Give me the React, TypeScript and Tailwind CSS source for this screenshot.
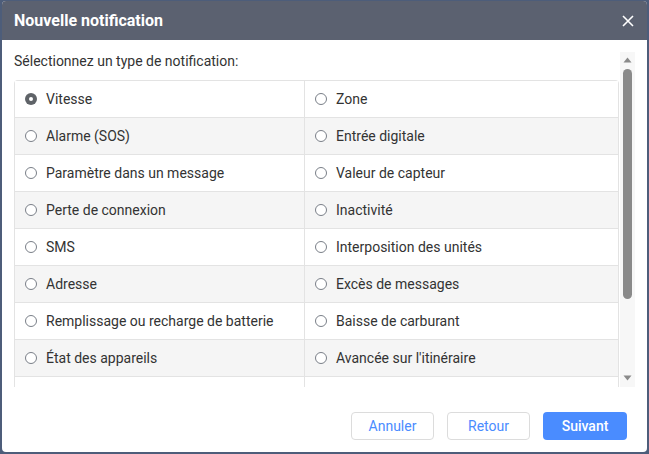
const types = [
  ["Vitesse", "Zone"],
  ["Alarme (SOS)", "Entrée digitale"],
  ["Paramètre dans un message", "Valeur de capteur"],
  ["Perte de connexion", "Inactivité"],
  ["SMS", "Interposition des unités"],
  ["Adresse", "Excès de messages"],
  ["Remplissage ou recharge de batterie", "Baisse de carburant"],
  ["État des appareils", "Avancée sur l'itinéraire"],
]

const Radio = ({ checked }: { checked?: boolean }) =>
  checked ? (
    <span className="w-[12px] h-[12px] rounded-full bg-[#5f6368] flex items-center justify-center shrink-0">
      <span className="w-[4px] h-[4px] rounded-full bg-white" />
    </span>
  ) : (
    <span className="w-[12px] h-[12px] rounded-full border border-[#7a7f88] bg-white shrink-0" />
  )

const Cell = ({ label, checked, first }: { label: string; checked?: boolean; first?: boolean }) => (
  <div className={`flex items-center gap-[9px] pl-[10px] h-full ${first ? "border-r border-[#e3e3e3]" : ""}`}>
    <Radio checked={checked} />
    <span className="text-[14px] text-[#333]">{label}</span>
  </div>
)

const App = () => {
  return (
    <div
      className="w-[649px] h-[454px] bg-[#4d5d7a] pt-px px-[2px] pb-[2px]"
      style={{ fontFamily: "Roboto, 'Liberation Sans', sans-serif" }}
    >
      <div className="h-full bg-white rounded-[4px] overflow-hidden flex flex-col">
        <div className="h-[39px] bg-[#5b6170] flex items-center justify-between pl-3 pr-[13px] shrink-0">
          <span className="text-white font-bold text-[16px]">Nouvelle notification</span>
          <svg width="12" height="12" viewBox="0 0 12 12" className="mt-px">
            <path d="M1 1L11 11M11 1L1 11" stroke="white" strokeWidth="1.6" />
          </svg>
        </div>

        <div className="flex pl-3 pr-3 mt-[12px] h-[335px] shrink-0">
          <div className="flex-1 overflow-hidden">
            <div className="h-[19px] leading-[19px] text-[14px] text-[#333] mb-[9px]">
              Sélectionnez un type de notification:
            </div>
            <div className="border-l border-r border-t border-[#e3e3e3] rounded-t-[4px]">
              {types.map(([a, b], i) => (
                <div
                  key={a}
                  className={`grid grid-cols-[290px_1fr] h-[37px] border-b border-[#e3e3e3] ${i % 2 === 1 ? "bg-[#f5f5f5]" : "bg-white"}`}
                >
                  <Cell label={a} checked={i === 0} first />
                  <Cell label={b} />
                </div>
              ))}
              {/* next row, scrolled out of view */}
              <div className="grid grid-cols-[290px_1fr] h-[37px] bg-white">
                <div className="border-r border-[#e3e3e3]" />
                <div />
              </div>
            </div>
          </div>
          <div className="w-[15px] bg-[#f7f7f7] flex flex-col items-center shrink-0 ml-px">
            <svg width="9" height="6" viewBox="0 0 9 6" className="mt-[5px]">
              <path d="M4.5 0.5L8.5 5.5H0.5Z" fill="#8a8a8a" />
            </svg>
            <div className="w-[9px] h-[230px] bg-[#8a8a8a] rounded-full mt-[6px]" />
            <div className="flex-1" />
            <svg width="9" height="6" viewBox="0 0 9 6" className="mb-[6px]">
              <path d="M0.5 0.5H8.5L4.5 5.5Z" fill="#8a8a8a" />
            </svg>
          </div>
        </div>

        <div className="flex justify-end gap-[13px] pr-[20px] mt-[25px]">
          <button className="w-[83px] h-[28px] border border-[#dcdcdc] rounded-[4px] text-[14px] text-[#4a8cff] bg-white">
            Annuler
          </button>
          <button className="w-[83px] h-[28px] border border-[#dcdcdc] rounded-[4px] text-[14px] text-[#4a8cff] bg-white">
            Retour
          </button>
          <button className="w-[84px] h-[28px] rounded-[4px] text-[14px] font-medium text-white bg-[#4a8cff]">
            Suivant
          </button>
        </div>
      </div>
    </div>
  )
}

export default App
